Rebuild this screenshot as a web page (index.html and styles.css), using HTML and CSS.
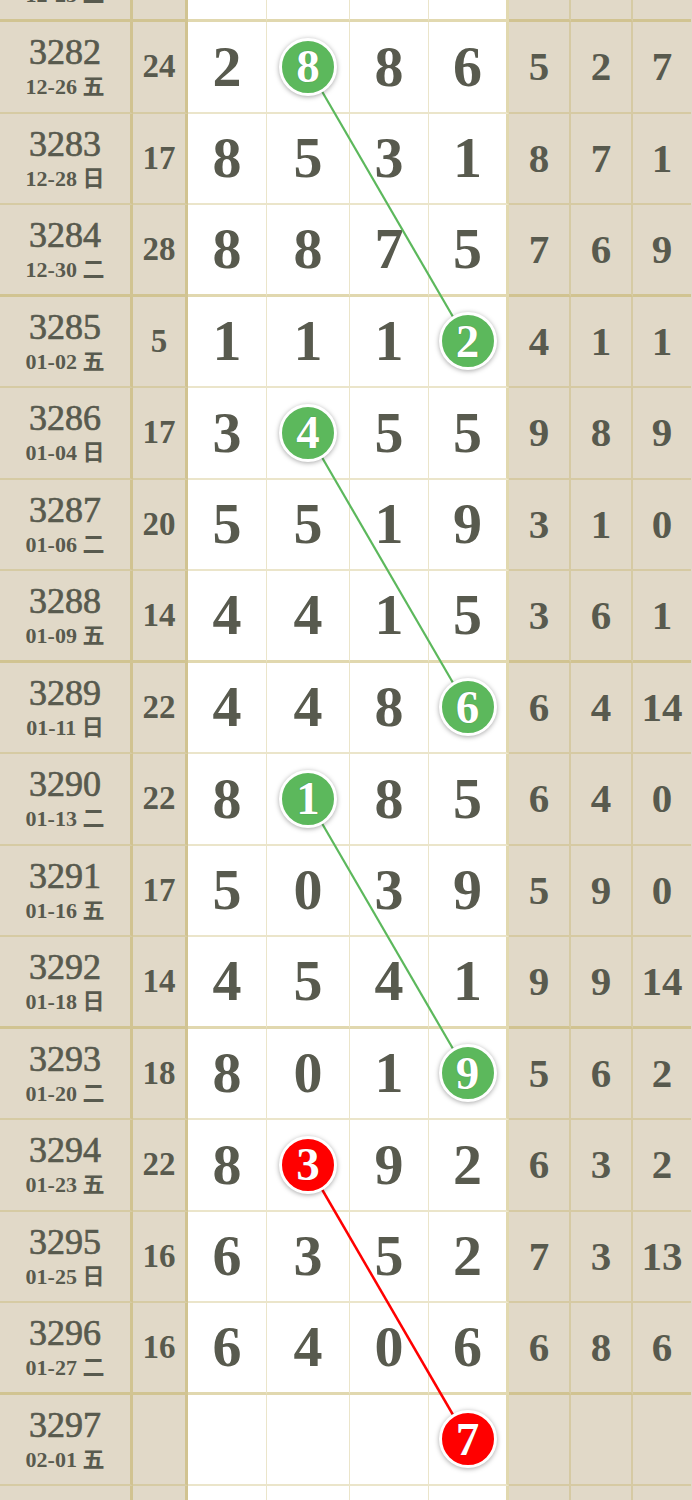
FILE: index.html
```html
<!DOCTYPE html>
<html lang="zh">
<head>
  <meta charset="UTF-8">
  <meta name="viewport" content="width=device-width, initial-scale=1.0">
  <title>走势图</title>
  <link rel="stylesheet" href="styles.css">
</head>
<body>

<div class="board">
  <!-- connecting lines between the marked balls -->
  <svg class="links" width="692" height="1647" viewBox="0 0 692 1647">
    <line x1="308" y1="136.25" x2="467.5" y2="410.75" class="green"/>
    <line x1="308" y1="502.25" x2="467.5" y2="776.75" class="green"/>
    <line x1="308" y1="868.25" x2="467.5" y2="1142.75" class="green"/>
    <line x1="308" y1="1234.25" x2="467.5" y2="1508.75" class="red"/>
  </svg>

  <div class="row group-end">
    <div class="cell issue"><span class="no">3281</span><span class="date">12-23 二</span></div>
    <div class="cell sum"></div>
    <div class="cell num"></div><div class="cell num"></div><div class="cell num"></div><div class="cell num last"></div>
    <div class="cell tail"></div><div class="cell tail"></div><div class="cell tail end"></div>
  </div>

  <div class="row">
    <div class="cell issue"><span class="no">3282</span><span class="date">12-26 五</span></div>
    <div class="cell sum">24</div>
    <div class="cell num">2</div><div class="cell num"><span class="ball">8</span></div><div class="cell num">8</div><div class="cell num last">6</div>
    <div class="cell tail">5</div><div class="cell tail">2</div><div class="cell tail end">7</div>
  </div>

  <div class="row">
    <div class="cell issue"><span class="no">3283</span><span class="date">12-28 日</span></div>
    <div class="cell sum">17</div>
    <div class="cell num">8</div><div class="cell num">5</div><div class="cell num">3</div><div class="cell num last">1</div>
    <div class="cell tail">8</div><div class="cell tail">7</div><div class="cell tail end">1</div>
  </div>

  <div class="row group-end">
    <div class="cell issue"><span class="no">3284</span><span class="date">12-30 二</span></div>
    <div class="cell sum">28</div>
    <div class="cell num">8</div><div class="cell num">8</div><div class="cell num">7</div><div class="cell num last">5</div>
    <div class="cell tail">7</div><div class="cell tail">6</div><div class="cell tail end">9</div>
  </div>

  <div class="row">
    <div class="cell issue"><span class="no">3285</span><span class="date">01-02 五</span></div>
    <div class="cell sum">5</div>
    <div class="cell num">1</div><div class="cell num">1</div><div class="cell num">1</div><div class="cell num last"><span class="ball">2</span></div>
    <div class="cell tail">4</div><div class="cell tail">1</div><div class="cell tail end">1</div>
  </div>

  <div class="row">
    <div class="cell issue"><span class="no">3286</span><span class="date">01-04 日</span></div>
    <div class="cell sum">17</div>
    <div class="cell num">3</div><div class="cell num"><span class="ball">4</span></div><div class="cell num">5</div><div class="cell num last">5</div>
    <div class="cell tail">9</div><div class="cell tail">8</div><div class="cell tail end">9</div>
  </div>

  <div class="row">
    <div class="cell issue"><span class="no">3287</span><span class="date">01-06 二</span></div>
    <div class="cell sum">20</div>
    <div class="cell num">5</div><div class="cell num">5</div><div class="cell num">1</div><div class="cell num last">9</div>
    <div class="cell tail">3</div><div class="cell tail">1</div><div class="cell tail end">0</div>
  </div>

  <div class="row group-end">
    <div class="cell issue"><span class="no">3288</span><span class="date">01-09 五</span></div>
    <div class="cell sum">14</div>
    <div class="cell num">4</div><div class="cell num">4</div><div class="cell num">1</div><div class="cell num last">5</div>
    <div class="cell tail">3</div><div class="cell tail">6</div><div class="cell tail end">1</div>
  </div>

  <div class="row">
    <div class="cell issue"><span class="no">3289</span><span class="date">01-11 日</span></div>
    <div class="cell sum">22</div>
    <div class="cell num">4</div><div class="cell num">4</div><div class="cell num">8</div><div class="cell num last"><span class="ball">6</span></div>
    <div class="cell tail">6</div><div class="cell tail">4</div><div class="cell tail end">14</div>
  </div>

  <div class="row">
    <div class="cell issue"><span class="no">3290</span><span class="date">01-13 二</span></div>
    <div class="cell sum">22</div>
    <div class="cell num">8</div><div class="cell num"><span class="ball">1</span></div><div class="cell num">8</div><div class="cell num last">5</div>
    <div class="cell tail">6</div><div class="cell tail">4</div><div class="cell tail end">0</div>
  </div>

  <div class="row">
    <div class="cell issue"><span class="no">3291</span><span class="date">01-16 五</span></div>
    <div class="cell sum">17</div>
    <div class="cell num">5</div><div class="cell num">0</div><div class="cell num">3</div><div class="cell num last">9</div>
    <div class="cell tail">5</div><div class="cell tail">9</div><div class="cell tail end">0</div>
  </div>

  <div class="row group-end">
    <div class="cell issue"><span class="no">3292</span><span class="date">01-18 日</span></div>
    <div class="cell sum">14</div>
    <div class="cell num">4</div><div class="cell num">5</div><div class="cell num">4</div><div class="cell num last">1</div>
    <div class="cell tail">9</div><div class="cell tail">9</div><div class="cell tail end">14</div>
  </div>

  <div class="row">
    <div class="cell issue"><span class="no">3293</span><span class="date">01-20 二</span></div>
    <div class="cell sum">18</div>
    <div class="cell num">8</div><div class="cell num">0</div><div class="cell num">1</div><div class="cell num last"><span class="ball">9</span></div>
    <div class="cell tail">5</div><div class="cell tail">6</div><div class="cell tail end">2</div>
  </div>

  <div class="row">
    <div class="cell issue"><span class="no">3294</span><span class="date">01-23 五</span></div>
    <div class="cell sum">22</div>
    <div class="cell num">8</div><div class="cell num"><span class="ball red">3</span></div><div class="cell num">9</div><div class="cell num last">2</div>
    <div class="cell tail">6</div><div class="cell tail">3</div><div class="cell tail end">2</div>
  </div>

  <div class="row">
    <div class="cell issue"><span class="no">3295</span><span class="date">01-25 日</span></div>
    <div class="cell sum">16</div>
    <div class="cell num">6</div><div class="cell num">3</div><div class="cell num">5</div><div class="cell num last">2</div>
    <div class="cell tail">7</div><div class="cell tail">3</div><div class="cell tail end">13</div>
  </div>

  <div class="row group-end">
    <div class="cell issue"><span class="no">3296</span><span class="date">01-27 二</span></div>
    <div class="cell sum">16</div>
    <div class="cell num">6</div><div class="cell num">4</div><div class="cell num">0</div><div class="cell num last">6</div>
    <div class="cell tail">6</div><div class="cell tail">8</div><div class="cell tail end">6</div>
  </div>

  <div class="row">
    <div class="cell issue"><span class="no">3297</span><span class="date">02-01 五</span></div>
    <div class="cell sum"></div>
    <div class="cell num"></div><div class="cell num"></div><div class="cell num"></div><div class="cell num last"><span class="ball red">7</span></div>
    <div class="cell tail"></div><div class="cell tail"></div><div class="cell tail end"></div>
  </div>

  <div class="row">
    <div class="cell issue"></div>
    <div class="cell sum"></div>
    <div class="cell num"></div><div class="cell num"></div><div class="cell num"></div><div class="cell num last"></div>
    <div class="cell tail"></div><div class="cell tail"></div><div class="cell tail end"></div>
  </div>
</div>

</body>
</html>
```

FILE: styles.css
```css
/* Reset */
* {
    margin: 0;
    padding: 0;
    box-sizing: border-box;
}

body {
    font-family: 'Liberation Serif', 'Noto Sans CJK SC', serif;
    background-color: #e1d9c8;
    color: #585a4e;
    overflow: hidden;
}

/* the chart is scrolled: first row is mostly out of view */
.board {
    position: relative;
    width: 692px;
    margin-top: -69.5px;
}

.links {
    position: absolute;
    top: 0;
    left: 0;
    z-index: 1;
    pointer-events: none;
}

.links line {
    stroke-width: 2.2;
}

.links .green {
    stroke: #5cb85c;
}

.links .red {
    stroke: #f00;
    stroke-width: 2.5;
}

.row {
    display: flex;
    height: 91.5px;
}

.cell {
    display: flex;
    align-items: center;
    justify-content: center;
    line-height: 1;
    font-weight: bold;
    border-right: 1px solid rgba(190, 170, 80, 0.3);
    border-bottom: 2px solid rgba(190, 170, 80, 0.3);
}

.row.group-end .cell {
    border-bottom: 3px solid rgba(190, 170, 80, 0.45);
}

/* issue number + date */
.issue {
    flex: 0 0 133px;
    flex-direction: column;
    gap: 5px;
    border-right: 3px solid rgba(190, 170, 80, 0.45);
}

.issue .no {
    font-size: 36px;
    font-weight: normal;
    line-height: 36px;
    -webkit-text-stroke: 0.7px #585a4e;
}

.issue .date {
    font-size: 22px;
    line-height: 24px;
}

.sum {
    flex: 0 0 55px;
    font-size: 33px;
    border-right: 3px solid rgba(190, 170, 80, 0.45);
}

/* the four drawn digits */
.num {
    flex: 0 0 79px;
    background-color: #fff;
    font-size: 58px;
}

.num:nth-child(4) {
    flex-basis: 83px;
}

.num.last {
    flex-basis: 80px;
    border-right: 3px solid rgba(190, 170, 80, 0.45);
}

.tail {
    flex: 0 0 62px;
    font-size: 41px;
    border-right-width: 2px;
}

.tail:nth-child(9) {
    flex-basis: 63px;
}

.tail.end {
    flex-basis: 58px;
    border-right: none;
}

.ball {
    position: relative;
    z-index: 2;
    display: flex;
    align-items: center;
    justify-content: center;
    width: 58px;
    height: 58px;
    border-radius: 50%;
    background-color: #5cb85c;
    border: 3px solid #fff;
    box-shadow: 0 1px 5px rgba(0, 0, 0, 0.35);
    color: #fff;
    font-size: 47px;
    text-shadow: 0 0 1px rgba(0, 0, 0, 0.35);
}

.ball.red {
    background-color: #f00;
}
```
